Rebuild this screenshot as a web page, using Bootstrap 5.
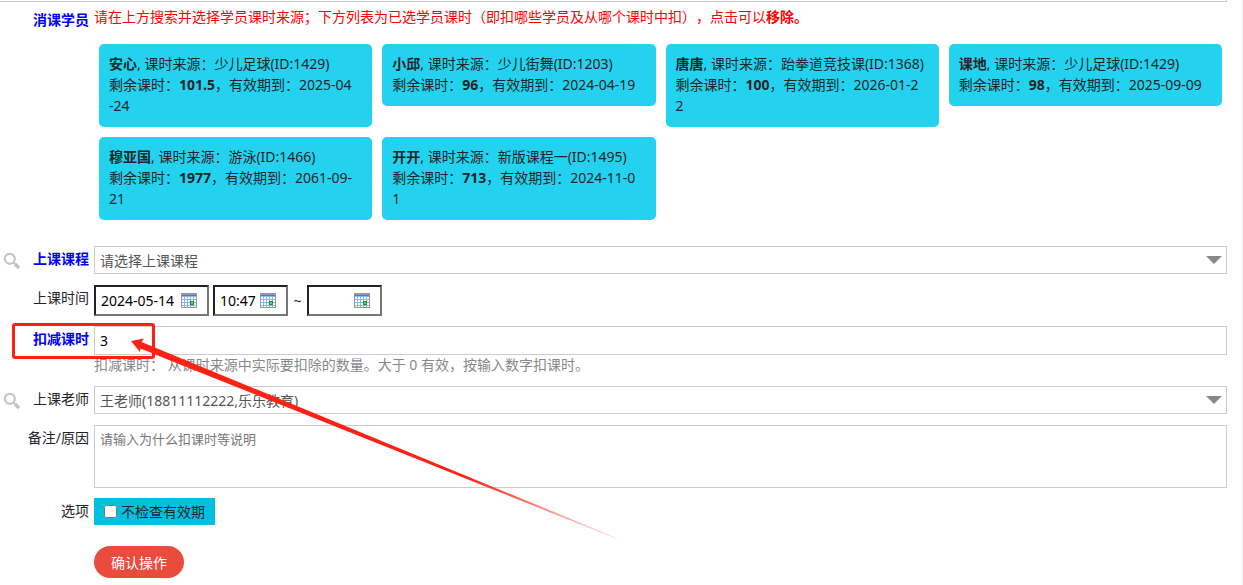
<!DOCTYPE html>
<html lang="zh-CN">
<head>
<meta charset="utf-8">
<meta name="viewport" content="width=device-width, initial-scale=1">
<title>消课</title>
<link href="https://cdn.jsdelivr.net/npm/bootstrap@5.3.0/dist/css/bootstrap.min.css" rel="stylesheet">
<style>
body{font:14px/21px "Noto Sans","Noto Sans CJK SC",sans-serif;color:#212529;text-spacing-trim:space-all}
.page-body{border-right:1px solid #eee;min-height:100vh;overflow:hidden}
.prev-field{height:2px;margin-right:15px;border:solid #ccc;border-width:0 1px 1px 0}
.lesson-form{padding-right:15px}
.lead-col{width:94px;flex:none;padding-top:7px;padding-right:5px}
.line .lead-col{padding-top:2px}
.req{color:#00f;font-weight:700}
.line{display:flex;margin-top:11px}
.line-near{margin-top:10px}
.line-far{margin-top:21px}
.hint{color:#f00}
.student{background:#23d2ef;border:0;border-radius:5px;padding:9px 10px 11px;line-height:21px;font-size:14px;color:#212529;white-space:nowrap}
.student:hover{background:#12c3e2}
.cell{padding:5px}
.field{display:block;width:100%;border:1px solid #ccc;border-radius:0;background-color:#fff;padding:0 5px;color:#000;font-size:14px;line-height:21px}
select.field{height:28px;appearance:none;color:#555;background:#fff url("data:image/svg+xml,%3Csvg xmlns='http://www.w3.org/2000/svg' width='16' height='8'%3E%3Cpath d='M0 0h16L8 8z' fill='%23888'/%3E%3C/svg%3E") no-repeat right 4px top 9px}
.amount{height:29px}
textarea.field{height:63px;resize:none;padding-top:3px;font-size:13px}
textarea.field::placeholder{color:#777}
.picker{height:31px;width:75px;border:2px solid;border-color:#222 #777 #777 #222;padding:0 5px;color:#000;font-size:14px;background:#fff url("data:image/svg+xml,%3Csvg xmlns='http://www.w3.org/2000/svg' width='16' height='15' shape-rendering='crispEdges'%3E%3Cpath fill='%23999' d='M0 0h16v15H0z'/%3E%3Cpath fill='%238fb5ee' d='M1 3h14v11H1z'/%3E%3Cpath fill='%234a7ebb' d='M1 2h14v1H1z'/%3E%3Cpath fill='%23fff' d='M1 4h2v2H1zM4 4h2v2H4zM7 4h2v2H7zM10 4h2v2h-2zM13 4h2v2h-2zM1 7h2v2H1zM4 7h2v2H4zM7 7h2v2H7zM10 7h2v2h-2zM13 7h2v2h-2zM1 10h2v2H1zM4 10h2v2H4zM7 10h2v2H7zM13 10h2v2h-2zM1 13h2v1H1zM4 13h2v1H4zM7 13h2v1H7zM10 13h2v1h-2zM13 13h2v1h-2z'/%3E%3Cpath fill='%23259414' d='M9 8h4v4H9z'/%3E%3Cpath fill='%2355dd33' d='M10 9h2v2h-2z'/%3E%3C/svg%3E") no-repeat right 10px top 6px}
.picker.day{width:115px}
.tilde{width:11px;text-align:center}
.help{color:#888;line-height:20px}
.option{background:#00c0e1;height:27px;padding:0 10px}
.option input{width:13px;height:13px;margin:0}
.submit{background:#e94c3d;color:#fff;border:0;border-radius:16px;width:90px;height:32px;font-size:14px;padding:0}
.submit:hover{background:#d53e30;color:#fff}
.pointer{position:absolute;left:8px;top:-6px;z-index:2;pointer-events:none}
.mag{margin:4px 0 0 3px}
</style>
</head>
<body>
<svg class="d-none"><symbol id="search" viewBox="0 0 18 18"><circle cx="6.800" cy="6.800" r="5" fill="none" stroke="#c4c4c4" stroke-width="2.200"/><path d="M10.500 10.500l2 2" stroke="#c4c4c4" stroke-width="2"/><path d="M12 12l4 4" stroke="#c4c4c4" stroke-width="3.600"/></symbol></svg>
<div class="page-body">
<div class="prev-field"></div>
<form class="lesson-form">
  <div class="d-flex">
    <div class="lead-col text-end"><span class="req">消课学员</span></div>
    <div class="flex-fill pt-1">
      <div class="hint pb-1">请在上方搜索并选择学员课时来源；下方列表为已选学员课时（即扣哪些学员及从哪个课时中扣），点击可以<b>移除。</b></div>
      <div class="row row-cols-4 g-0 pt-2 align-items-start">
        <div class="cell"><button type="button" class="student w-100 text-start"><b>安心</b>, 课时来源：少儿足球(ID:1429)<br>剩余课时：<b>101.5</b>，有效期到：2025-04<br>-24</button></div>
        <div class="cell"><button type="button" class="student w-100 text-start"><b>小邱</b>, 课时来源：少儿街舞(ID:1203)<br>剩余课时：<b>96</b>，有效期到：2024-04-19</button></div>
        <div class="cell"><button type="button" class="student w-100 text-start"><b>唐唐</b>, 课时来源：跆拳道竞技课(ID:1368)<br>剩余课时：<b>100</b>，有效期到：2026-01-2<br>2</button></div>
        <div class="cell"><button type="button" class="student w-100 text-start"><b>课地</b>, 课时来源：少儿足球(ID:1429)<br>剩余课时：<b>98</b>，有效期到：2025-09-09</button></div>
        <div class="cell"><button type="button" class="student w-100 text-start"><b>穆亚国</b>, 课时来源：游泳(ID:1466)<br>剩余课时：<b>1977</b>，有效期到：2061-09-<br>21</button></div>
        <div class="cell"><button type="button" class="student w-100 text-start"><b>开开</b>, 课时来源：新版课程一(ID:1495)<br>剩余课时：<b>713</b>，有效期到：2024-11-0<br>1</button></div>
      </div>
    </div>
  </div>
  <div class="line line-far">
    <div class="lead-col d-flex justify-content-between align-items-start"><svg class="mag" width="18" height="18" aria-hidden="true"><use href="#search"/></svg><label class="req" for="course">上课课程</label></div>
    <select class="field" id="course"><option>请选择上课课程</option></select>
  </div>
  <div class="line">
    <label class="lead-col text-end" for="day">上课时间</label>
    <div class="d-flex gap-1 align-items-center">
      <input class="picker day" id="day" value="2024-05-14">
      <input class="picker" aria-label="开始时间" value="10:47">
      <span class="tilde">~</span>
      <input class="picker" aria-label="结束时间">
    </div>
  </div>
  <div class="line line-near position-relative">
    <label class="lead-col text-end req" for="amount">扣减课时</label>
    <div class="flex-fill">
      <input class="field amount" id="amount" value="3">
      <div class="help">扣减课时： 从课时来源中实际要扣除的数量。大于 0 有效，按输入数字扣课时。</div>
    </div>
    <svg class="pointer" width="620" height="225" aria-hidden="true">
      <defs><linearGradient id="fade" gradientUnits="userSpaceOnUse" x1="460" y1="0" x2="612" y2="0"><stop stop-color="#ff2214"/><stop offset="1" stop-color="#ff2214" stop-opacity=".1"/></linearGradient></defs>
      <rect x="5.500" y="4.500" width="140" height="33" rx="1.500" fill="none" stroke="#ff2214" stroke-width="3"/>
      <path d="M123 21l13-2.500-2.500 3.500L609 218v1L167 42.500 132.500 28.500l-.5 3.500z" fill="url(#fade)"/>
    </svg>
  </div>
  <div class="line">
    <div class="lead-col d-flex justify-content-between align-items-start"><svg class="mag" width="18" height="18" aria-hidden="true"><use href="#search"/></svg><label for="teacher">上课老师</label></div>
    <select class="field" id="teacher"><option>王老师(18811112222,乐乐教育)</option></select>
  </div>
  <div class="line">
    <label class="lead-col text-end" for="note">备注/原因</label>
    <textarea class="field" id="note" placeholder="请输入为什么扣课时等说明"></textarea>
  </div>
  <div class="line line-near">
    <div class="lead-col text-end">选项</div>
    <label class="option d-flex align-items-center gap-1"><input type="checkbox">不检查有效期</label>
  </div>
  <div class="line line-far"><div class="lead-col"></div><button type="submit" class="submit btn">确认操作</button></div>
</form>
</div>
<script src="https://cdn.jsdelivr.net/npm/bootstrap@5.3.0/dist/js/bootstrap.bundle.min.js"></script>
</body>
</html>
